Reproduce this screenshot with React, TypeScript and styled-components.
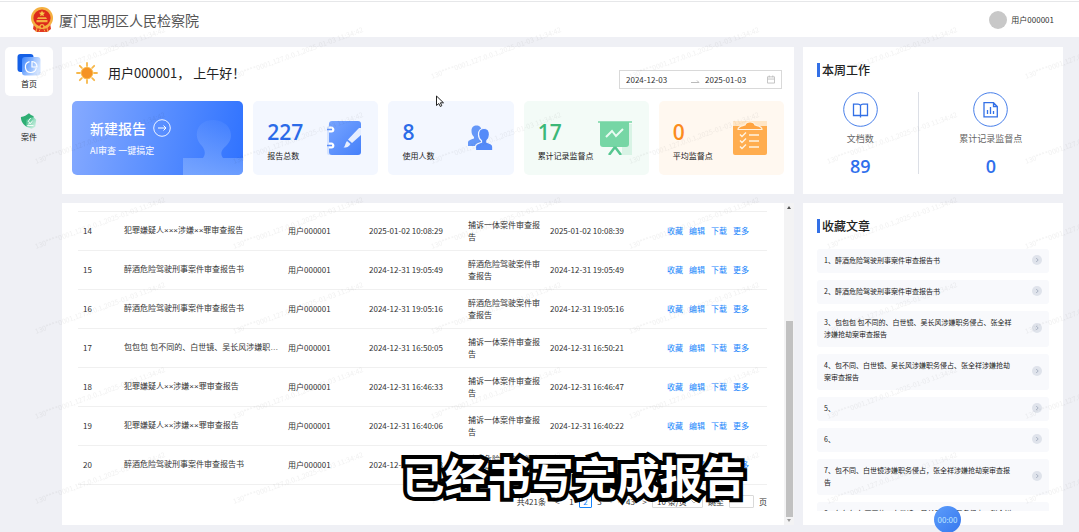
import React from "react";
import styled, { createGlobalStyle } from "styled-components";

const GlobalStyle = createGlobalStyle`
  *, *::before, *::after { box-sizing: border-box; }
  body {
    margin: 0;
    background: #eff0f5;
    color: #333;
    font-family: "Noto Sans CJK SC", "Liberation Sans", sans-serif;
    font-size: 8px;
    line-height: 12px;
  }
  button, input, select { font: inherit; color: inherit; }
  h1, h2, p, ol { margin: 0; padding: 0; font-weight: 400; }
`;

const Page = styled.div`
  position: relative;
  display: flex;
  flex-direction: column;
  height: 100vh;
  overflow: hidden;
`;

const Header = styled.header`
  display: flex;
  align-items: center;
  justify-content: space-between;
  height: 37px;
  padding: 3px 25px 0 30px;
  background: linear-gradient(#fff 1px, #e6e7e9 1px, #e6e7e9 2px, #fff 2px);
`;

const Brand = styled.div`
  display: flex;
  align-items: center;
  gap: 5px;
`;

const BrandName = styled.h1`
  font-size: 14px;
  line-height: 20px;
  color: #555;
`;

const UserBox = styled.div`
  display: flex;
  align-items: center;
  gap: 4px;
`;

const Avatar = styled.span`
  width: 18px;
  height: 18px;
  border-radius: 50%;
  background: #c8c8c8;
`;

const Body = styled.div`
  display: flex;
  flex: 1;
  min-height: 0;
  padding: 10px 16px 7px 5px;
  gap: 9px;
`;

const SideNav = styled.nav`
  display: flex;
  flex-direction: column;
  gap: 7px;
  width: 48px;
`;

const NavItem = styled.a<{ $active?: boolean }>`
  display: flex;
  flex-direction: column;
  align-items: center;
  justify-content: center;
  gap: 1px;
  height: 49px;
  border-radius: 5px;
  color: #222;
  text-decoration: none;
  background: ${(p) => (p.$active ? "#fff" : "transparent")};
`;

const Main = styled.main`
  position: relative;
  display: grid;
  flex: 1;
  min-width: 0;
  grid-template-columns: minmax(0, 1fr) 260px;
  grid-template-rows: auto minmax(0, 1fr);
  gap: 9px;
`;

const Panel = styled.section`
  min-width: 0;
  min-height: 0;
  background: #fff;
`;

const Overview = styled(Panel)`
  padding: 15px 10px 19px;
`;

const GreetingRow = styled.div`
  display: flex;
  justify-content: space-between;
  height: 27px;
  margin-bottom: 12px;
`;

const Greeting = styled.div`
  display: flex;
  align-items: center;
  align-self: flex-start;
  gap: 10px;
  padding-left: 4px;
  font-size: 13px;
  line-height: 22px;
  color: #222;
`;

const DateRange = styled.div`
  display: flex;
  align-items: center;
  align-self: flex-end;
  width: 163px;
  height: 19px;
  margin-right: 2px;
  padding: 0 6px;
  border: 1px solid #d9d9d9;
`;

const DateInput = styled.input`
  width: 62px;
  padding: 0;
  border: 0;
  outline: 0;
  background: none;
`;

const DateArrow = styled.svg`
  flex: none;
  margin-right: 5px;
`;

const Cards = styled.div`
  display: grid;
  grid-template-columns: 171fr 125fr 125fr 125fr 125fr;
  gap: 10px;
`;

const NewReport = styled.button`
  position: relative;
  display: flex;
  flex-direction: column;
  align-items: flex-start;
  height: 74px;
  padding: 18px;
  border: 0;
  border-radius: 5px;
  overflow: hidden;
  text-align: left;
  color: #fff;
  background: linear-gradient(100deg, #86aaff 0%, #5a8fff 50%, #2f72ff 100%);
`;

const NewTitle = styled.span`
  display: flex;
  align-items: center;
  gap: 7px;
  font-size: 14px;
  line-height: 18px;
  font-weight: 500;
`;

const NewHint = styled.span`
  margin-top: 8px;
  font-size: 9px;
  line-height: 12px;
`;

const Stamp = styled.svg`
  position: absolute;
  right: 0;
  bottom: 0;
`;

const StatCard = styled.div<{ $bg: string }>`
  display: flex;
  align-items: center;
  justify-content: space-between;
  height: 74px;
  padding: 0 17px 0 14px;
  border-radius: 5px;
  background: ${(p) => p.$bg};
  white-space: nowrap;
`;

const StatText = styled.div`
  width: 57px;
  padding-top: 6px;
  color: #222;
`;

const StatValue = styled.div<{ $color: string }>`
  margin-bottom: 6px;
  font-family: "Open Sans", "Noto Sans", sans-serif;
  font-size: 21px;
  line-height: 24px;
  font-weight: 600;
  color: ${(p) => p.$color};
`;

const PanelTitle = styled.h2`
  height: 14px;
  margin-left: 14px;
  padding-left: 2px;
  border-left: 3px solid #3370e6;
  font-size: 12px;
  line-height: 14px;
  font-weight: 500;
  color: #222;
`;

const Week = styled(Panel)`
  padding-top: 16px;
`;

const WeekStats = styled.div`
  display: flex;
  margin-top: 15px;
`;

const WeekStat = styled.div<{ $grow: number }>`
  display: flex;
  flex: ${(p) => p.$grow};
  flex-direction: column;
  align-items: center;
  height: 82px;

  & + & { border-left: 1px solid #dcdfe6; }
  svg { flex: none; }
`;

const WeekLabel = styled.span`
  margin-top: 6px;
  font-size: 9px;
  line-height: 12px;
  color: #666;
`;

const WeekValue = styled.span`
  margin-top: 13px;
  font-family: "Open Sans", "Noto Sans", sans-serif;
  font-size: 18px;
  line-height: 16px;
  font-weight: 600;
  color: #2f6fec;
`;

const Records = styled(Panel)`
  display: flex;
`;

const RecordsScroll = styled.div`
  flex: 1;
  min-width: 0;
  overflow: hidden;
  padding: 8px 17px 0 16px;
`;

const Table = styled.table`
  width: 100%;
  table-layout: fixed;
  border-collapse: separate;
  border-spacing: 0;
  border-top: 1px solid #f0f0f0;
`;

const Cell = styled.td`
  height: 39px;
  padding: 0 4px 0 5px;
  border-bottom: 1px solid #f0f0f0;
`;

const TitleCell = styled(Cell)`
  overflow: hidden;
  text-overflow: ellipsis;
  white-space: nowrap;
  font-family: "Liberation Sans", "Noto Sans CJK SC", sans-serif;
`;

const Actions = styled.div`
  display: flex;
  gap: 6px;
`;

const ActionLink = styled.a`
  color: #1684fc;
  text-decoration: none;
`;

const Pagination = styled.div`
  display: flex;
  align-items: center;
  justify-content: flex-end;
  height: 13px;
  margin-top: 10px;
`;

const PageButton = styled.button<{ $current?: boolean }>`
  width: 13px;
  height: 13px;
  margin-right: 1px;
  padding: 0;
  border: 1px solid ${(p) => (p.$current ? "#1684fc" : "transparent")};
  border-radius: 1px;
  background: none;
  line-height: 11px;
  color: ${(p) => (p.$current ? "#1684fc" : "inherit")};
`;

const Total = styled.span`
  margin-right: 5px;
`;

const Dots = styled.span`
  width: 17px;
  text-align: center;
  color: #bbb;
`;

const PageSize = styled.span`
  position: relative;
  display: flex;
  align-items: center;
  margin-right: 5px;

  svg { position: absolute; right: 6px; pointer-events: none; }
`;

const PageSizeSelect = styled.select`
  width: 51px;
  height: 13px;
  padding: 0 4px;
  border: 1px solid #d9d9d9;
  border-radius: 1px;
  appearance: none;
  background: #fff;
  line-height: 11px;
`;

const Jump = styled.label`
  display: flex;
  align-items: center;
  gap: 5px;
`;

const JumpInput = styled.input`
  width: 25px;
  height: 13px;
  border: 1px solid #d9d9d9;
  border-radius: 1px;
`;

const ScrollTrack = styled.div`
  display: flex;
  flex-direction: column;
  align-items: center;
  justify-content: space-between;
  width: 10px;
  padding: 3px 0;
  background: #f3f3f4;
`;

const ScrollArrow = styled.span<{ $down?: boolean }>`
  border: 2px solid transparent;
  border-top: ${(p) => (p.$down ? "3px solid #999" : "0")};
  border-bottom: ${(p) => (p.$down ? "0" : "3px solid #555")};
`;

const ScrollThumb = styled.span`
  width: 7px;
  height: 62%;
  margin: auto 0 2px;
  background: #c1c1c1;
`;

const Favorites = styled(Panel)`
  display: flex;
  flex-direction: column;
  padding: 16px 14px 14px 0;
`;

const FavoriteList = styled.ol`
  display: flex;
  flex: 1;
  flex-direction: column;
  gap: 7px;
  min-height: 0;
  margin: 16px 0 0 14px;
  overflow: hidden;
  list-style: none;
`;

const Favorite = styled.li`
  display: flex;
  flex: none;
  align-items: center;
  justify-content: space-between;
  padding: 5px 7px 7px;
  border-radius: 3px;
  background: #f8f9fc;
  font-size: 7px;
  line-height: 12px;
  color: #222;
`;

const FavoriteText = styled.span`
  width: 191px;
`;

const Watermark = styled.svg`
  position: absolute;
  inset: 0;
  width: 100%;
  height: 100%;
  pointer-events: none;
`;

const Caption = styled.p`
  position: absolute;
  left: 0;
  right: 0;
  bottom: 21px;
  padding-left: 68px;
  text-align: center;
  font-size: 43px;
  line-height: 72px;
  font-weight: 700;
  color: #fff;
  -webkit-text-stroke: 8px #000;
  paint-order: stroke fill;
  stroke-linejoin: round;
  pointer-events: none;
`;

const Timer = styled.button`
  position: absolute;
  right: 118px;
  bottom: -1px;
  width: 27px;
  height: 27px;
  padding: 0;
  border: 0;
  border-radius: 50%;
  background: linear-gradient(135deg, #5c9dfb, #3677ee);
  color: #bfe6ff;
`;

const Pointer = styled.svg`
  position: absolute;
  left: 435px;
  top: 95px;
  pointer-events: none;
`;

const Emblem = () => (
  <svg width="24" height="26" viewBox="0 0 24 26" aria-hidden="true">
    <path d="M4 16h16l1 6-4 3H7l-4-3z" fill="#e23a22" />
    <circle cx="12" cy="11" r="11" fill="#f5b041" />
    <circle cx="12" cy="11" r="8.6" fill="#dd2a1b" />
    <path d="M12 3.6l.9 2 2.2.2-1.7 1.4.5 2.1-1.9-1.1-1.9 1.1.5-2.1-1.7-1.4 2.2-.2z" fill="#f8c84a" />
    <path d="M7 12h10l-1-1.800H8zM6.500 13h11v2.200h-11z" fill="#f5b041" />
    <path d="M5 17.500c3 2 11 2 14 0l-1 3c-3 1.200-9 1.200-12 0z" fill="#f5b041" />
    <circle cx="12" cy="19.500" r="2.600" fill="#f5b041" />
    <circle cx="12" cy="19.500" r="1.200" fill="#dd2a1b" />
    <path d="M7 21l-1 4M17 21l1 4M10 22.500l-1 2M14 22.500l1 2" stroke="#f5b041" strokeWidth="1" />
  </svg>
);

const HomeIcon = () => (
  <svg width="24" height="24" viewBox="0 0 24 24" aria-hidden="true">
    <defs>
      <linearGradient id="homeFront" x1="0" y1="0" x2="1" y2="0.4">
        <stop offset="0" stopColor="#3f88ff" />
        <stop offset="1" stopColor="#cfe2ff" />
      </linearGradient>
    </defs>
    <rect x="0.500" y="1" width="16" height="18" rx="3" fill="#1460e6" />
    <rect x="5" y="4" width="18.500" height="18.500" rx="3" fill="url(#homeFront)" opacity="0.940" />
    <path d="M12.500 8.700a5.500 5.500 0 1 0 6.800 6.500" fill="none" stroke="#fff" strokeWidth="1.200" />
    <path d="M15 8.500v5.500h5a5.200 5.200 0 0 0-5-5.500z" fill="none" stroke="#fff" strokeWidth="1.200" />
  </svg>
);

const CaseIcon = () => (
  <svg width="18" height="18" viewBox="0 0 20 19" aria-hidden="true">
    <defs>
      <linearGradient id="caseFront" x1="0" y1="0" x2="1" y2="1">
        <stop offset="0" stopColor="#3fbf8a" />
        <stop offset="1" stopColor="#d5f5e6" />
      </linearGradient>
    </defs>
    <path d="M1 5c4 0 6-2 9-4 2 2 4 3 5 3 1 6-3 10-7 12C4 14 1 10 1 5z" fill="#2eae74" />
    <path d="M7 8l8-3 3 3-1 8-4 2-6-2z" fill="url(#caseFront)" opacity="0.850" />
    <path d="M8 14.500h7M12 6l-3 4 3 2 2-3M9 13l3-1" stroke="#fff" fill="none" />
  </svg>
);

const SunIcon = () => (
  <svg width="22" height="22" viewBox="0 0 22 22" aria-hidden="true">
    <g stroke="#f7b84b" strokeWidth="1.800" strokeLinecap="round">
      <path d="M11 1v3M11 18v3M1 11h3M18 11h3M3.800 3.800l2 2M16.200 16.200l2 2M3.800 18.200l2-2M16.200 5.800l2-2" />
    </g>
    <circle cx="11" cy="11" r="6.300" fill="#fbc25a" />
    <circle cx="11" cy="11" r="5.400" fill="#f59324" />
  </svg>
);

const NotebookIcon = () => (
  <svg width="34" height="34" viewBox="0 0 34 34" aria-hidden="true">
    <defs>
      <linearGradient id="noteFill" x1="0" y1="0" x2="1" y2="1">
        <stop offset="0" stopColor="#78a5ff" />
        <stop offset="1" stopColor="#4580fa" />
      </linearGradient>
    </defs>
    <rect x="0" y="5" width="8" height="29" rx="2" fill="#d5e3ff" />
    <rect x="2" y="0" width="32" height="34" rx="3" fill="url(#noteFill)" />
    <path d="M2 6.500h2.500a2 2 0 0 1 0 4H2M2 22.500h2.500a2 2 0 0 1 0 4H2" fill="#f3f7ff" stroke="#fff" strokeWidth="1.800" />
    <path d="M0 8.500h5M0 24.500h5" stroke="#5b8ffb" strokeWidth="1.600" />
    <path d="M34 7v7l-9 8-4-3.500L32 7z" fill="#e6eeff" />
    <path d="M20 20l3.500 3c-1.500 3-4 3.500-7 3.500 2-1.500 1.500-4.500 3.500-6.500z" fill="#e6eeff" />
  </svg>
);

const PeopleIcon = () => (
  <svg width="34" height="34" viewBox="0 0 34 34" aria-hidden="true">
    <path
      d="M8.500 10c0-4 2.200-5.500 5-5.500s5 1.500 5 5.500c0 3-1 4.500-2.300 6v2l5 4V25H5v-3c0-2.500 1.500-3 6-4.500v-1.500C9.500 14.500 8.500 13 8.500 10z"
      fill="#6497f8"
    />
    <path
      d="M15.500 13.500c0-4 2.500-6 5.500-6s5.500 2 5.500 6c0 3-1.300 5-2.700 6.200v1.600c4.200 1.500 6 2 6 4.700v3.500H12.500V26c0-2.700 1.800-3.200 6-4.700v-1.600c-1.500-1.200-3-3.200-3-6.200z"
      fill="#548af9"
      stroke="#f3f7ff"
      strokeWidth="1.200"
    />
  </svg>
);

const BoardIcon = () => (
  <svg width="34" height="34" viewBox="0 0 34 34" aria-hidden="true">
    <rect x="24" y="3" width="10" height="31" fill="#d8f3e5" />
    <path d="M2 1h29v22a3 3 0 0 1-3 3H5a3 3 0 0 1-3-3z" fill="#76d6a5" />
    <path d="M0 1h34" stroke="#76d6a5" strokeWidth="1.600" />
    <path d="M8 16l6-6 4 5 7-7" stroke="#e9fbf2" strokeWidth="2" fill="none" />
    <path d="M17 26l-6 8M17 26l6 8" stroke="#56c690" strokeWidth="2.500" />
  </svg>
);

const ClipboardIcon = () => (
  <svg width="34" height="34" viewBox="0 0 34 34" aria-hidden="true">
    <rect x="0" y="0" width="34" height="10" fill="#ffe6c6" />
    <path d="M0 5h34v27a2 2 0 0 1-2 2H2a2 2 0 0 1-2-2z" fill="#ffad4f" />
    <path d="M5 8.500c0-3.500 4-3.500 7-4.500 1-4 9-4 10 0 3 1 7 1 7 4.500z" fill="#ffa440" stroke="#fff1df" strokeWidth="1.200" />
    <g fill="none" stroke="#fff3e2" strokeWidth="1.400">
      <path d="M7 13.500l2 2 4-4M7 19.500l2 2 4-4M7 25.500l2 2 4-4M16 14h10M16 20h10M16 26h10" />
    </g>
  </svg>
);

const WeekIcon = ({ kind }: { kind: "book" | "chart" }) => (
  <svg width="35" height="35" viewBox="0 0 35 35" fill="none" stroke="#3370e6" aria-hidden="true">
    <circle cx="17.500" cy="17.500" r="16.800" strokeWidth="0.900" />
    {kind === "book" ? (
      <path d="M17.500 13.500c-.5-1-1.500-1.300-2.500-1.300h-4.500v11.300H17.500h7V12.200H20c-1 0-2 .3-2.500 1.300zM17.500 13.500v12" strokeWidth="1.300" />
    ) : (
      <path d="M11 10.700h9.500l3.800 3.800v10.300H11zM20.500 10.700v3.800h3.800M14.500 18v4M17.500 15v7M20.500 19v3" strokeWidth="1.300" />
    )}
  </svg>
);

const navItems = [
  { label: "首页", icon: <HomeIcon />, active: true },
  { label: "案件", icon: <CaseIcon />, active: false },
];

const stats = [
  { value: "227", label: "报告总数", color: "#2b6be8", bg: "#f3f7ff", icon: <NotebookIcon /> },
  { value: "8", label: "使用人数", color: "#2b6be8", bg: "#f3f7ff", icon: <PeopleIcon /> },
  { value: "17", label: "累计记录监督点", color: "#3cb878", bg: "#f3fbf7", icon: <BoardIcon /> },
  { value: "0", label: "平均监督点", color: "#fb8c1e", bg: "#fff8f0", icon: <ClipboardIcon /> },
];

const DRUNK = "醉酒危险驾驶刑事案件审查报告书";
const SUSPECT = "犯罪嫌疑人××涉嫌××罪审查报告";
const ARREST_TYPE = "捕诉一体案件审查报告";
const DRUNK_TYPE = "醉酒危险驾驶案件审查报告";

const records = [
  [14, "犯罪嫌疑人×××涉嫌××罪审查报告", "2025-01-02 10:08:29", ARREST_TYPE, "2025-01-02 10:08:39"],
  [15, DRUNK, "2024-12-31 19:05:49", DRUNK_TYPE, "2024-12-31 19:05:49"],
  [16, DRUNK, "2024-12-31 19:05:16", DRUNK_TYPE, "2024-12-31 19:05:16"],
  [17, "包包包 包不同的、白世镜、吴长风涉嫌职务侵占案审查报告", "2024-12-31 16:50:05", ARREST_TYPE, "2024-12-31 16:50:21"],
  [18, SUSPECT, "2024-12-31 16:46:33", ARREST_TYPE, "2024-12-31 16:46:47"],
  [19, SUSPECT, "2024-12-31 16:40:06", ARREST_TYPE, "2024-12-31 16:40:22"],
  [20, DRUNK, "2024-12-31 16:38:28", DRUNK_TYPE, "2024-12-31 16:38:28"],
];

const favorites = [
  DRUNK,
  DRUNK,
  "包包包 包不同的、白世镜、吴长风涉嫌职务侵占、张全祥涉嫌抢劫案审查报告",
  "包不同、白世镜、吴长风涉嫌职务侵占、张全祥涉嫌抢劫案审查报告",
  "",
  "",
  "包不同、白世镜涉嫌职务侵占，张全祥涉嫌抢劫案审查报告",
  "包包包 包不同的、白世镜、吴长风涉嫌职务侵占、张全祥涉嫌抢劫案审查报告",
];

export default function App() {
  return (
    <Page>
      <GlobalStyle />
      <Header>
        <Brand>
          <Emblem />
          <BrandName>厦门思明区人民检察院</BrandName>
        </Brand>
        <UserBox>
          <Avatar />
          用户000001
        </UserBox>
      </Header>

      <Body>
        <SideNav>
          {navItems.map((item) => (
            <NavItem key={item.label} href="#" $active={item.active}>
              {item.icon}
              {item.label}
            </NavItem>
          ))}
        </SideNav>

        <Main>
          <Overview>
            <GreetingRow>
              <Greeting>
                <SunIcon />
                用户000001， 上午好！
              </Greeting>
              <DateRange>
                <DateInput aria-label="开始日期" defaultValue="2024-12-03" />
                <DateArrow width="12" height="8" viewBox="0 0 12 8" fill="none" stroke="#bbb">
                  <path d="M3 6.500h8l-2-2" />
                </DateArrow>
                <DateInput aria-label="结束日期" defaultValue="2025-01-03" />
                <svg width="9" height="9" viewBox="0 0 9 9" fill="none" stroke="#bbb" aria-hidden="true">
                  <path d="M.5 1.500h8v7h-8zM.5 4h8M2.500 0v2M6.500 0v2" />
                </svg>
              </DateRange>
            </GreetingRow>
            <Cards>
              <NewReport>
                <Stamp width="60" height="56" viewBox="0 0 60 56" aria-hidden="true">
                  <defs>
                    <linearGradient id="stampFill" x1="0" y1="0" x2="0" y2="1">
                      <stop offset="0" stopColor="#9cc0ff" stopOpacity="0.080" />
                      <stop offset="1" stopColor="#9cc0ff" stopOpacity="0.550" />
                    </linearGradient>
                  </defs>
                  <path d="M0 56V39h20c3-4 2-8-1-12-10-10-5-26 11-26s24 16 13 26c-5 4-6 8-3 12h20v17z" fill="url(#stampFill)" />
                </Stamp>
                <NewTitle>
                  新建报告
                  <svg width="18" height="18" viewBox="0 0 18 18" fill="none" stroke="#fff" aria-hidden="true">
                    <circle cx="9" cy="9" r="8.300" strokeWidth="0.900" />
                    <path d="M5 9h8M10.500 6.500L13 9l-2.500 2.500" />
                  </svg>
                </NewTitle>
                <NewHint>AI审查 一键搞定</NewHint>
              </NewReport>
              {stats.map((s) => (
                <StatCard key={s.label} $bg={s.bg}>
                  <StatText>
                    <StatValue $color={s.color}>{s.value}</StatValue>
                    {s.label}
                  </StatText>
                  {s.icon}
                </StatCard>
              ))}
            </Cards>
          </Overview>

          <Week>
            <PanelTitle>本周工作</PanelTitle>
            <WeekStats>
              <WeekStat $grow={115}>
                <WeekIcon kind="book" />
                <WeekLabel>文档数</WeekLabel>
                <WeekValue>89</WeekValue>
              </WeekStat>
              <WeekStat $grow={145}>
                <WeekIcon kind="chart" />
                <WeekLabel>累计记录监督点</WeekLabel>
                <WeekValue>0</WeekValue>
              </WeekStat>
            </WeekStats>
          </Week>

          <Records>
            <RecordsScroll>
              <Table>
                <colgroup>
                  <col width="41" />
                  <col />
                  <col width="81" />
                  <col width="99" />
                  <col width="82" />
                  <col width="117" />
                  <col width="105" />
                </colgroup>
                <tbody>
                  {records.map(([no, title, created, type, updated]) => (
                    <tr key={no}>
                      <Cell>{no}</Cell>
                      <TitleCell>{title}</TitleCell>
                      <Cell>用户000001</Cell>
                      <Cell>{created}</Cell>
                      <Cell>{type}</Cell>
                      <Cell>{updated}</Cell>
                      <Cell>
                        <Actions>
                          {["收藏", "编辑", "下载", "更多"].map((a) => (
                            <ActionLink key={a} href="#">{a}</ActionLink>
                          ))}
                        </Actions>
                      </Cell>
                    </tr>
                  ))}
                </tbody>
              </Table>
              <Pagination>
                <Total>共421条</Total>
                <PageButton>&lt;</PageButton>
                <PageButton>1</PageButton>
                <PageButton $current>2</PageButton>
                <PageButton>3</PageButton>
                <Dots>•••</Dots>
                <PageButton>43</PageButton>
                <PageButton>&gt;</PageButton>
                <PageSize>
                  <PageSizeSelect aria-label="每页条数">
                    <option>10 条/页</option>
                  </PageSizeSelect>
                  <svg width="6" height="4" viewBox="0 0 6 4" fill="none" stroke="#bbb">
                    <path d="M.5.5L3 3l2.500-2.500" />
                  </svg>
                </PageSize>
                <Jump>
                  跳至
                  <JumpInput />
                  页
                </Jump>
              </Pagination>
            </RecordsScroll>
            <ScrollTrack>
              <ScrollArrow />
              <ScrollThumb />
              <ScrollArrow $down />
            </ScrollTrack>
          </Records>

          <Favorites>
            <PanelTitle>收藏文章</PanelTitle>
            <FavoriteList>
              {favorites.map((text, i) => (
                <Favorite key={i}>
                  <FavoriteText>{`${i + 1}、${text}`}</FavoriteText>
                  <svg width="10" height="10" viewBox="0 0 10 10" aria-hidden="true">
                    <circle cx="5" cy="5" r="5" fill="#dfe3eb" />
                    <path d="M4.200 3l2 2-2 2" fill="none" stroke="#a3acbd" strokeWidth="0.900" />
                  </svg>
                </Favorite>
              ))}
            </FavoriteList>
          </Favorites>
        </Main>
      </Body>

      <Watermark aria-hidden="true">
        <defs>
          <pattern id="watermark" x="30" y="15" width="198" height="85" patternUnits="userSpaceOnUse">
            <text x="6" y="64" fontSize="7" fill="#000" fillOpacity="0.060" transform="rotate(-20 6 64)">
              130****0001,127.0.0.1,2025-01-03 11:34:42
            </text>
          </pattern>
        </defs>
        <rect width="100%" height="100%" fill="url(#watermark)" />
      </Watermark>

      <Timer>00:00</Timer>
      <Caption>已经书写完成报告</Caption>
      <Pointer width="10" height="13" viewBox="0 0 10 13" aria-hidden="true">
        <path d="M1.500 1v9.500l2.300-2 1.500 3 1.500-.8-1.400-2.900H8.500z" fill="#fff" stroke="#222" />
      </Pointer>
    </Page>
  );
}
